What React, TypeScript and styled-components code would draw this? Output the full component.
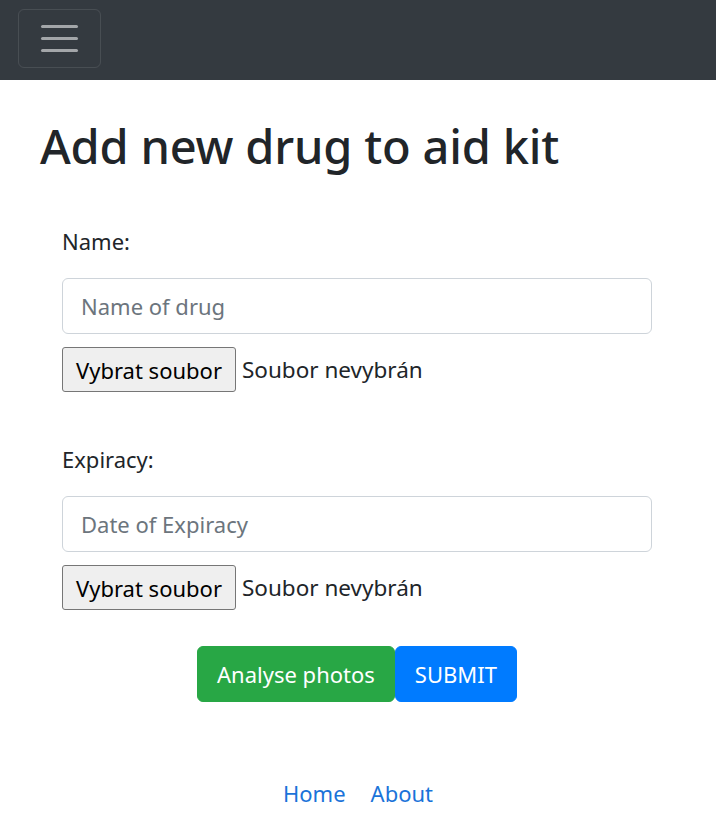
import styled, { createGlobalStyle } from "styled-components";

const GlobalStyle = createGlobalStyle`
    html, body {
        margin: 0;
        padding: 0;
        background: #fff;
    }
    body {
        font-family: "Noto Sans", "Open Sans", "Liberation Sans", sans-serif;
        color: #212529;
    }
`;

const Navbar = styled.nav`
    height: 80px;
    box-sizing: border-box;
    padding: 9px 18px;
    background-color: #343a40;
    display: flex;
    align-items: flex-start;
`;

const Toggler = styled.button`
    width: 83px;
    height: 59px;
    box-sizing: border-box;
    background: transparent;
    border: 1px solid rgba(255, 255, 255, 0.1);
    border-radius: 6px;
    display: flex;
    flex-direction: column;
    justify-content: center;
    align-items: center;
    gap: 9px;
    padding: 0;
    cursor: pointer;
`;

const TogglerLine = styled.span`
    display: block;
    width: 37px;
    height: 3px;
    border-radius: 2px;
    background-color: rgba(255, 255, 255, 0.55);
`;

const Main = styled.main`
    padding: 35px 0 0 40px;
`;

const Title = styled.h1`
    margin: 0;
    font-size: 47px;
    line-height: 62px;
    font-weight: 500;
    letter-spacing: -0.2px;
`;

const Form = styled.form`
    width: 590px;
    margin: 46px 0 0 62px;
    display: flex;
    flex-direction: column;
`;

const Field = styled.div<{ $top?: number }>`
    display: flex;
    flex-direction: column;
    margin-top: ${(p) => p.$top ?? 0}px;
`;

const Label = styled.label`
    font-size: 22px;
    line-height: 36px;
    margin-bottom: 19px;
`;

const TextInput = styled.input`
    height: 56px;
    box-sizing: border-box;
    width: 100%;
    padding: 0 18px;
    font-family: inherit;
    font-size: 22px;
    color: #495057;
    border: 1px solid #ced4da;
    border-radius: 6px;
    outline: none;

    &::placeholder {
        color: #6c757d;
    }
`;

const FileRow = styled.div`
    margin-top: 13px;
    display: flex;
    align-items: center;
    gap: 6px;
    height: 45px;
`;

const FileButton = styled.button`
    height: 45px;
    width: 174px;
    box-sizing: border-box;
    padding: 0;
    font-family: inherit;
    font-size: 22px;
    color: #000;
    background-color: #efefef;
    border: 1px solid #767676;
    border-radius: 3px;
`;

const FileName = styled.span`
    font-size: 22.5px;
    color: #212529;
`;

const Actions = styled.div`
    margin-top: 36px;
    display: flex;
    justify-content: center;
`;

const ActionButton = styled.button<{ $color: string }>`
    height: 56px;
    padding: 0 19px;
    font-family: inherit;
    font-size: 22px;
    color: #fff;
    background-color: ${(p) => p.$color};
    border: 1px solid ${(p) => p.$color};
    border-radius: 6px;
    cursor: pointer;
`;

const Footer = styled.footer`
    margin-top: 73px;
    display: flex;
    justify-content: center;
    gap: 25px;
`;

const FooterLink = styled.a`
    font-size: 22px;
    line-height: 36px;
    color: #1a73d9;
    text-decoration: none;
`;

function FilePicker() {
    return (
        <FileRow>
            <FileButton type="button">Vybrat soubor</FileButton>
            <FileName>Soubor nevybrán</FileName>
        </FileRow>
    );
}

export default function App() {
    return (
        <>
            <GlobalStyle />
            <Navbar>
                <Toggler type="button" aria-label="Toggle navigation">
                    <TogglerLine />
                    <TogglerLine />
                    <TogglerLine />
                </Toggler>
            </Navbar>
            <Main>
                <Title>Add new drug to aid kit</Title>
            </Main>
            <Form onSubmit={(e) => e.preventDefault()}>
                <Field $top={0}>
                    <Label htmlFor="name">Name:</Label>
                    <TextInput id="name" placeholder="Name of drug" />
                    <FilePicker />
                </Field>
                <Field $top={49}>
                    <Label htmlFor="expiracy">Expiracy:</Label>
                    <TextInput id="expiracy" placeholder="Date of Expiracy" />
                    <FilePicker />
                </Field>
                <Actions>
                    <ActionButton type="button" $color="#28a745">Analyse photos</ActionButton>
                    <ActionButton type="submit" $color="#007bff">SUBMIT</ActionButton>
                </Actions>
            </Form>
            <Footer>
                <FooterLink href="#">Home</FooterLink>
                <FooterLink href="#">About</FooterLink>
            </Footer>
        </>
    );
}
